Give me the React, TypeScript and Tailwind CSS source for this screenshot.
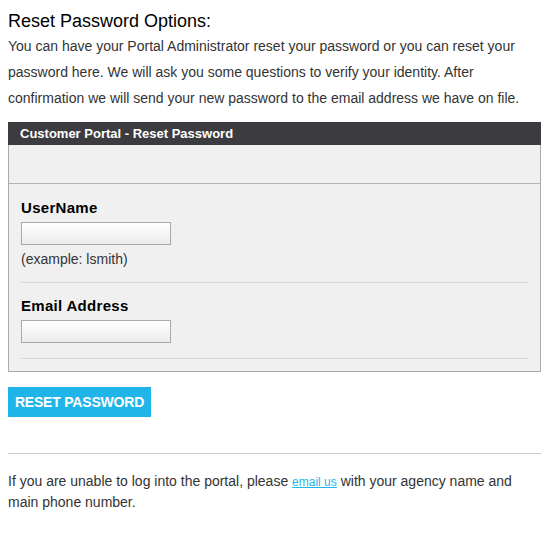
import React from "react";

export default function App() {
  return (
    <div className="w-[560px] h-[538px] bg-white px-2 pt-[10px] text-[#333] font-['Liberation_Sans',Arial,sans-serif]">
      <h2 className="text-[18px] leading-[22px] text-black">Reset Password Options:</h2>
      <p className="text-[14px] leading-[26px] mt-[1px] pr-[20px]">
        You can have your Portal Administrator reset your password or you can reset your password here. We will ask you some questions to verify your identity. After confirmation we will send your new password to the email address we have on file.
      </p>
      <div className="mt-[11px] w-[533px]">
        <div className="h-[23px] bg-[#3c3c40] text-white font-bold text-[13px] leading-[23px] px-3">
          Customer Portal - Reset Password
        </div>
        <div className="bg-[#f0f0f0] border border-t-0 border-[#aaaaaa]">
          <div className="h-[39px] border-b border-[#b4b4b4]" />
          <div className="px-3 pt-[15px]">
            <div className="pb-[15px] border-b border-[#d9d9d9]">
              <label className="block text-[15px] font-bold text-black leading-[18px] tracking-[0.3px]">UserName</label>
              <input className="mt-[5px] block w-[150px] h-[23px] border border-[#a9a9a9] bg-gradient-to-b from-[#ffffff] to-[#ececec]" />
              <div className="text-[14px] leading-[16px] mt-[6px] text-[#333]">(example: lsmith)</div>
            </div>
            <div className="pt-[14px] pb-[15px] border-b border-[#d9d9d9]">
              <label className="block text-[15px] font-bold text-black leading-[18px] tracking-[0.3px]">Email Address</label>
              <input className="mt-[5px] block w-[150px] h-[23px] border border-[#a9a9a9] bg-gradient-to-b from-[#ffffff] to-[#ececec]" />
            </div>
            <div className="h-[12px]" />
          </div>
        </div>
      </div>
      <button className="mt-[15px] h-[30px] w-[143px] bg-[#1fb5e8] text-white font-bold text-[14px] leading-[28px] uppercase tracking-[-0.2px]">
        Reset Password
      </button>
      <div className="mt-[36px] w-[533px] border-t border-[#cccccc]" />
      <p className="mt-[17px] text-[14px] leading-[21px]">
        If you are unable to log into the portal, please{" "}
        <a href="#" className="text-[12px] leading-none text-[#1fb5e8] underline">email us</a> with your agency name and
        <br />
        main phone number.
      </p>
    </div>
  );
}
